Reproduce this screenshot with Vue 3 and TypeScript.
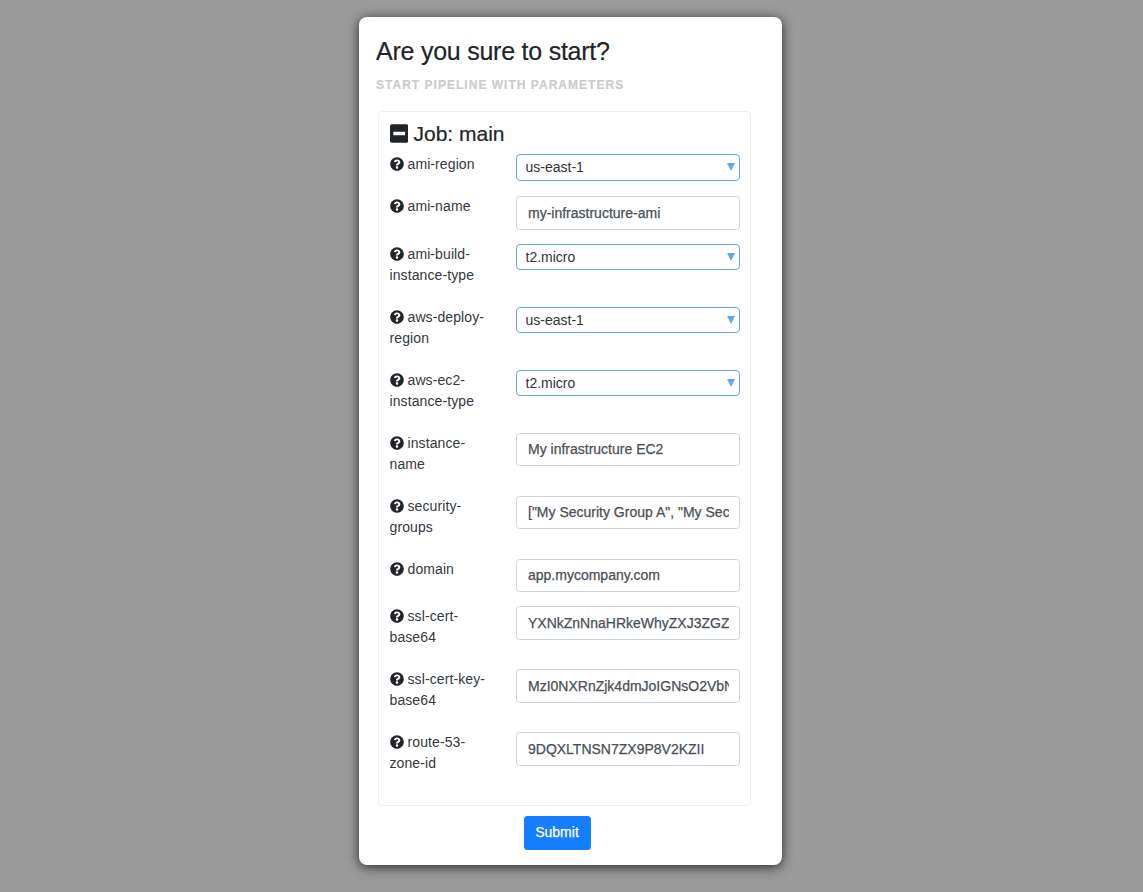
<script setup lang="ts">
import { reactive } from 'vue'

interface Param {
  name: string
  kind: 'select' | 'text'
  value: string
}

const params = reactive<Param[]>([
  { name: 'ami-region', kind: 'select', value: 'us-east-1' },
  { name: 'ami-name', kind: 'text', value: 'my-infrastructure-ami' },
  { name: 'ami-build-instance-type', kind: 'select', value: 't2.micro' },
  { name: 'aws-deploy-region', kind: 'select', value: 'us-east-1' },
  { name: 'aws-ec2-instance-type', kind: 'select', value: 't2.micro' },
  { name: 'instance-name', kind: 'text', value: 'My infrastructure EC2' },
  { name: 'security-groups', kind: 'text', value: '["My Security Group A", "My Security Group B"]' },
  { name: 'domain', kind: 'text', value: 'app.mycompany.com' },
  { name: 'ssl-cert-base64', kind: 'text', value: 'YXNkZnNnaHRkeWhyZXJ3ZGZ' },
  { name: 'ssl-cert-key-base64', kind: 'text', value: 'MzI0NXRnZjk4dmJoIGNsO2VbNDU2' },
  { name: 'route-53-zone-id', kind: 'text', value: '9DQXLTNSN7ZX9P8V2KZII' },
])
</script>

<template>
  <div class="overlay">
    <section class="modal">
      <h1>Are you sure to start?</h1>
      <p class="subtitle">START PIPELINE WITH PARAMETERS</p>
      <div class="job">
        <h2>
          <svg class="toggle" viewBox="0 0 448 512"><path fill="currentColor" d="M400 32H48C21.5 32 0 53.5 0 80v352c0 26.5 21.5 48 48 48h352c26.5 0 48-21.5 48-48V80c0-26.5-21.5-48-48-48zM92 296c-6.6 0-12-5.4-12-12v-56c0-6.6 5.4-12 12-12h264c6.6 0 12 5.4 12 12v56c0 6.6-5.4 12-12 12H92z" /></svg>
          <span>Job: main</span>
        </h2>
        <div class="params">
          <div v-for="p in params" :key="p.name" class="row">
            <label>
              <svg class="help" viewBox="0 0 512 512"><path fill="currentColor" d="M504 256c0 136.997-111.043 248-248 248S8 392.997 8 256C8 119.083 119.043 8 256 8s248 111.083 248 248zM262.655 90c-54.497 0-89.255 22.957-116.549 63.758-3.536 5.286-2.353 12.415 2.715 16.258l34.699 26.31c5.205 3.947 12.621 3.008 16.665-2.122 17.864-22.658 30.113-35.797 57.303-35.797 20.429 0 45.698 13.148 45.698 32.958 0 14.976-12.363 22.667-32.534 33.976C247.128 238.528 216 254.941 216 296v4c0 6.627 5.373 12 12 12h56c6.627 0 12-5.373 12-12v-1.333c0-28.462 83.186-29.647 83.186-106.667 0-58.002-60.165-102-116.531-102zM256 338c-25.365 0-46 20.635-46 46 0 25.364 20.635 46 46 46s46-20.636 46-46c0-25.365-20.635-46-46-46z" /></svg>
              {{ p.name }}
            </label>
            <div v-if="p.kind === 'select'" class="select">
              <select v-model="p.value"><option>{{ p.value }}</option></select>
              <svg class="arrow" viewBox="0 0 8 8"><path fill="#64a5ec" d="M0 0h8L4 8z" /></svg>
            </div>
            <input v-else v-model="p.value" type="text" spellcheck="false" />
          </div>
        </div>
      </div>
      <button type="button">Submit</button>
    </section>
  </div>
</template>

<style>
body {
  margin: 0;
  background: #9a9a9a;
}
</style>

<style scoped>
.overlay {
  box-sizing: border-box;
  height: 892px;
  padding: 17px 3px 0 0;
  display: flex;
  justify-content: center;
  align-items: flex-start;
  overflow: hidden;
  background: #9a9a9a;
  color: #212529;
  font-family: "Liberation Sans", Arial, sans-serif;
}
.modal {
  box-sizing: border-box;
  width: 423px;
  height: 848px;
  padding: 19px 30px 15px 17.5px;
  border-radius: 8px;
  background: #fff;
  box-shadow: 0 2px 12px rgba(0, 0, 0, 0.75);
  display: flex;
  flex-direction: column;
}
h1 {
  margin: 0;
  font-size: 25px;
  line-height: 30px;
  font-weight: 400;
  letter-spacing: -0.24px;
  -webkit-text-stroke: 0.2px currentColor;
}
.subtitle {
  margin: 11px 0 0;
  font-size: 12px;
  line-height: 16px;
  font-weight: 700;
  letter-spacing: 1.02px;
  color: #ccc;
  -webkit-text-stroke: 0.2px currentColor;
}
.job {
  box-sizing: border-box;
  width: 373px;
  height: 695px;
  margin: 18px 0 0 2px;
  padding: 9px 10px 0;
  border: 1px solid #f0f0f0;
  border-radius: 4px;
}
h2 {
  margin: 0;
  height: 33px;
  padding-left: 0.5px;
  display: flex;
  gap: 5.6px;
  font-size: 21px;
  line-height: 26px;
  font-weight: 400;
  -webkit-text-stroke: 0.2px currentColor;
}
.toggle {
  width: 18.4px;
  height: 21px;
  margin-top: 1.5px;
  stroke: none;
}
.params {
  display: grid;
  grid-template-rows: 42px 48px repeat(5, 63px) 47px 63px 63px 63px;
}
.row {
  display: grid;
  grid-template-columns: 127px 224px;
  align-items: start;
}
label {
  width: 97px;
  padding-left: 0.5px;
  font-size: 14px;
  line-height: 21px;
  letter-spacing: 0.1px;
  color: #35393d;
}
.help {
  width: 14px;
  height: 14px;
  color: #212529;
  vertical-align: -1.5px;
}
.select {
  display: grid;
  align-items: center;
}
select,
input {
  box-sizing: border-box;
  width: 100%;
  margin: 0;
  background: #fff;
  font-family: inherit;
  font-size: 14px;
  outline: 0;
}
select {
  grid-area: 1 / 1;
  height: 27px;
  padding: 0 8.5px 1px;
  border: 1px solid #64a5ec;
  border-radius: 4px;
  color: #303438;
  appearance: none;
}
.row:nth-child(n + 2) select {
  height: 26px;
  padding-bottom: 0;
}
.arrow {
  grid-area: 1 / 1;
  justify-self: end;
  width: 8px;
  height: 8px;
  margin: 0 5.5px 0.5px 0;
}
input {
  height: 34px;
  padding: 0 10.5px 0 11px;
  border: 1px solid #ced4da;
  border-radius: 3.5px;
  color: #495057;
  -webkit-text-stroke: 0.25px currentColor;
}
.row:nth-child(n + 6):nth-child(-n + 8) input {
  height: 33px;
  padding-bottom: 1px;
}
button {
  width: 67px;
  height: 34px;
  margin: 10px 0 0 147.5px;
  padding: 0 0 2px;
  border: 0;
  border-radius: 3.5px;
  background: #147eff;
  color: #fff;
  font-family: inherit;
  font-size: 14px;
  -webkit-text-stroke: 0.25px currentColor;
}
</style>
